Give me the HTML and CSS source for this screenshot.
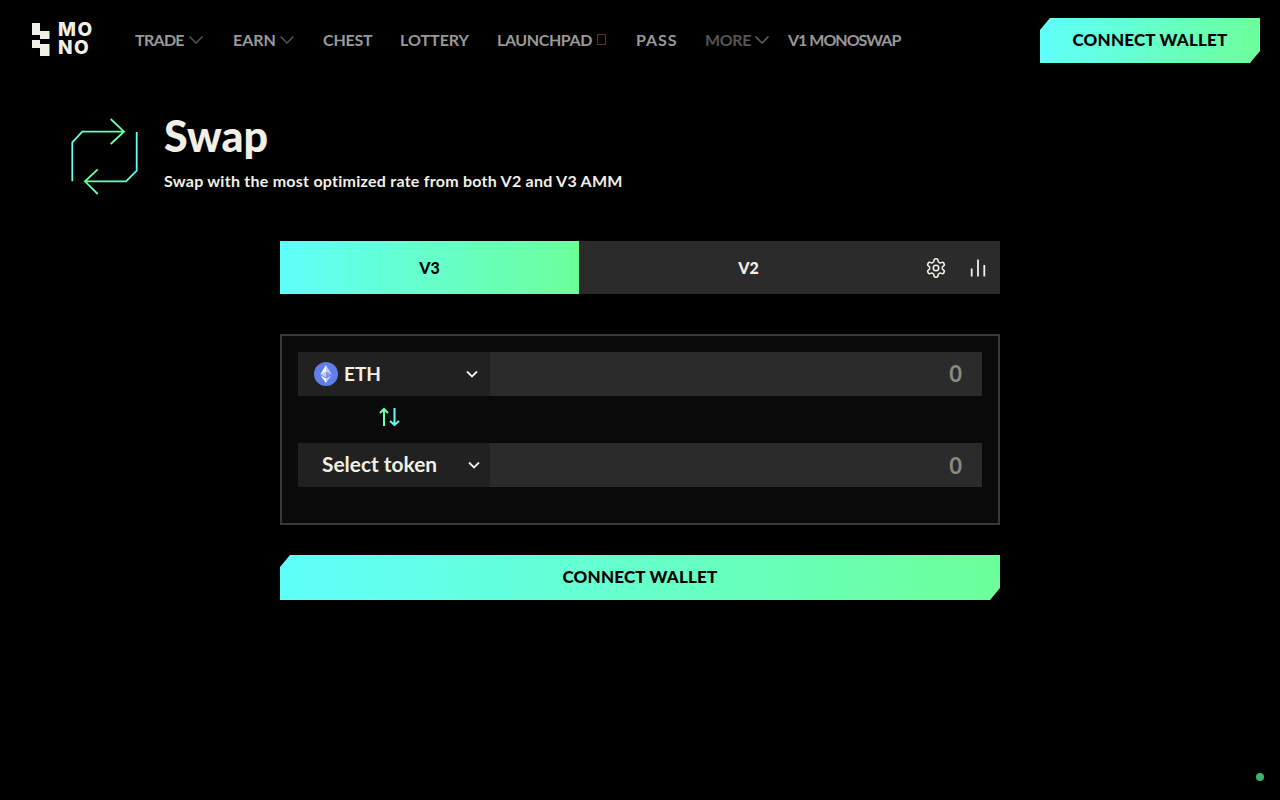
FILE: index.html
```html
<!DOCTYPE html>
<html lang="en">
<head>
<meta charset="utf-8">
<title>Swap</title>
<link rel="stylesheet" href="styles.css">
</head>
<body>
<header class="header">
  <div class="brand">
    <svg class="brand-mark" width="18" height="33" viewBox="0 0 18 33"><path d="M0 0H8V8H17.500V16H8V12H0ZM0 17H8V21H17.500V33H8V25H0Z" fill="#f2f0e6"/></svg>
    <div class="brand-text"><span>MO</span><span>NO</span></div>
  </div>
  <nav class="nav">
    <a class="nav-item w-trade">TRADE <svg class="chev" width="14" height="8" viewBox="0 0 14 8"><path d="M.5.5 7 7 13.500.5" fill="none" stroke="#555" stroke-width="1.500"/></svg></a>
    <a class="nav-item w-earn">EARN <svg class="chev" width="14" height="8" viewBox="0 0 14 8"><path d="M.5.5 7 7 13.500.5" fill="none" stroke="#555" stroke-width="1.500"/></svg></a>
    <a class="nav-item w-chest">CHEST</a>
    <a class="nav-item w-lottery">LOTTERY</a>
    <a class="nav-item w-launch">LAUNCHPAD <i class="tofu"></i></a>
    <a class="nav-item w-pass">PASS</a>
    <a class="nav-item dim w-more">MORE <svg class="chev" width="14" height="8" viewBox="0 0 14 8"><path d="M.5.5 7 7 13.500.5" fill="none" stroke="#666" stroke-width="1.500"/></svg></a>
    <a class="nav-item w-v1">V1 MONOSWAP</a>
  </nav>
  <button class="cta cta-top">CONNECT WALLET</button>
</header>

<section class="hero">
  <svg class="hero-icon" width="68" height="80" viewBox="70 117 68 80" fill="none" stroke-width="1.800">
    <defs>
      <linearGradient id="gt" gradientUnits="userSpaceOnUse" x1="72" y1="0" x2="124" y2="0"><stop offset="0" stop-color="#5ffff5"/><stop offset="1" stop-color="#6cff9a"/></linearGradient>
      <linearGradient id="gb" gradientUnits="userSpaceOnUse" x1="137" y1="0" x2="85" y2="0"><stop offset="0" stop-color="#5ffff5"/><stop offset="1" stop-color="#6cff9a"/></linearGradient>
    </defs>
    <path d="M72.300 181.300V142.300L82.300 131.700H124M110.700 119 124 131.700 110.700 144" stroke="url(#gt)"/>
    <path d="M136.700 132V170.700L126 181.300H85M97.700 169.300 85 181.300 97.700 194" stroke="url(#gb)"/>
  </svg>
  <div class="hero-text">
    <h1 class="title">Swap</h1>
    <p class="subtitle">Swap with the most optimized rate from both V2 and V3 AMM</p>
  </div>
</section>

<main class="panel">
  <div class="tabs">
    <div class="tab tab-active">V3</div>
    <div class="tab tab-idle">V2</div>
    <div class="tab-tools">
      <svg width="22" height="22" viewBox="0 0 24 24" fill="none" stroke="#f2f0e6" stroke-width="1.700" stroke-linecap="round" stroke-linejoin="round"><circle cx="12" cy="12" r="3"/><path d="M12.220 2h-.44a2 2 0 0 0-2 2v.18a2 2 0 0 1-1 1.730l-.43.250a2 2 0 0 1-2 0l-.150-.080a2 2 0 0 0-2.730.730l-.220.380a2 2 0 0 0 .730 2.730l.150.100a2 2 0 0 1 1 1.720v.510a2 2 0 0 1-1 1.740l-.150.090a2 2 0 0 0-.730 2.730l.220.380a2 2 0 0 0 2.730.730l.150-.080a2 2 0 0 1 2 0l.430.250a2 2 0 0 1 1 1.730V20a2 2 0 0 0 2 2h.44a2 2 0 0 0 2-2v-.18a2 2 0 0 1 1-1.730l.430-.250a2 2 0 0 1 2 0l.150.080a2 2 0 0 0 2.730-.730l.220-.390a2 2 0 0 0-.730-2.730l-.150-.080a2 2 0 0 1-1-1.740v-.500a2 2 0 0 1 1-1.740l.150-.090a2 2 0 0 0 .730-2.730l-.220-.380a2 2 0 0 0-2.730-.730l-.150.080a2 2 0 0 1-2 0l-.430-.250a2 2 0 0 1-1-1.730V4a2 2 0 0 0-2-2z"/></svg>
      <svg width="16" height="18" viewBox="0 0 16 18" fill="none" stroke="#f2f0e6" stroke-width="1.800"><path d="M1.700 17.500V9.500M8 17.500V0.500M14.300 17.500V6"/></svg>
    </div>
  </div>

  <div class="card">
    <div class="row">
      <div class="select select-eth">
        <svg class="eth" width="24" height="24" viewBox="0 0 24 24"><circle cx="12" cy="12" r="12" fill="#627eea"/><path d="M12 3v6.700l5.600 2.500z" fill="#fff" fill-opacity=".6"/><path d="M12 3 6.400 12.200 12 9.700z" fill="#fff"/><path d="M12 16.500v4.500l5.600-7.800z" fill="#fff" fill-opacity=".6"/><path d="M12 16.500V21l-5.600-7.800z" fill="#fff"/><path d="m12 15.400 5.600-3.200L12 9.700z" fill="#fff" fill-opacity=".2"/><path d="m6.400 12.200 5.600 3.200V9.700z" fill="#fff" fill-opacity=".6"/></svg>
        <span class="token">ETH</span>
        <svg class="caret" width="12" height="8" viewBox="0 0 12 8"><path d="M1 1.500 6 6.500l5-5" fill="none" stroke="#f2f0e6" stroke-width="1.800"/></svg>
      </div>
      <div class="amount">0</div>
    </div>
    <div class="flip">
      <svg width="22" height="22" viewBox="0 0 22 22" fill="none" stroke-width="2"><path d="M5 20V3M1 7l4-4 4 4" stroke="#6cffb0"/><path d="M15.500 2v17M11 15l4.500 4 4.500-4" stroke="#5ffff0"/></svg>
    </div>
    <div class="row">
      <div class="select select-none">
        <span class="token token-wide">Select token</span>
        <svg class="caret" width="12" height="8" viewBox="0 0 12 8"><path d="M1 1.500 6 6.500l5-5" fill="none" stroke="#f2f0e6" stroke-width="1.800"/></svg>
      </div>
      <div class="amount amount-low">0</div>
    </div>
  </div>

  <button class="cta cta-main">CONNECT WALLET</button>
</main>

<span class="status-dot"></span>
</body>
</html>
```

FILE: styles.css
```css
* { box-sizing: border-box; }
html, body { margin: 0; height: 100%; }
body {
  background: #000;
  color: #f2f0e6;
  font-family: "Lato", "Noto Sans", sans-serif;
  overflow: hidden;
}
.header {
  height: 80px;
  padding: 0 20px 0 32px;
  display: flex;
  align-items: center;
}
.brand { display: flex; align-items: center; gap: 8px; width: 103px; margin-top: -2px; }
.brand-text {
  display: flex;
  flex-direction: column;
  font-family: "Inter", sans-serif;
  font-weight: 800;
  font-size: 19px;
  line-height: 18px;
  letter-spacing: 1.500px;
  color: #f2f0e6;
}
.nav {
  display: flex;
  align-items: center;
  flex: 1;
  font-size: 16px;
  font-weight: 700;
  color: #999;
  padding-bottom: 2px;
}
.nav-item { display: flex; align-items: center; gap: 5px; white-space: nowrap; }
.chev { margin-top: 1px; }
.w-trade { width: 98px; letter-spacing: -.7px; }
.w-earn { width: 90px; gap: 4px; }
.w-chest { width: 77px; letter-spacing: -.2px; }
.w-lottery { width: 97px; }
.w-launch { width: 139px; letter-spacing: -.4px; }
.w-pass { width: 69px; letter-spacing: .9px; }
.w-more { width: 83px; gap: 4px; letter-spacing: -.4px; }
.w-v1 { width: 113px; letter-spacing: -1px; }
.dim { color: #555; }
.tofu {
  display: inline-block;
  width: 9px;
  height: 11px;
  border: 1px solid #6b2a26;
  margin-top: 1px;
}
.cta {
  border: 0;
  padding: 0 0 2px;
  color: #000;
  font: 900 17px "Lato", sans-serif;
  letter-spacing: .2px;
  background: linear-gradient(90deg, #5ffffb, #6cff9a);
  clip-path: polygon(10px 0, 100% 0, 100% calc(100% - 12px), calc(100% - 10px) 100%, 0 100%, 0 12px);
}
.cta-top { width: 220px; height: 45px; margin-top: 1px; }
.hero {
  display: flex;
  align-items: flex-start;
  gap: 26px;
  padding: 32px 0 0 70px;
}
.hero-icon { margin-top: 5px; }
.title { margin: 0; font-size: 43px; line-height: 48px; font-weight: 900; }
.subtitle { margin: 11px 0 0; font-size: 16px; line-height: 20px; font-weight: 700; letter-spacing: .25px; }
.panel { width: 720px; margin: 44px auto 0; }
.tabs { display: flex; height: 53px; background: #2b2b2b; align-items: center; }
.tab { display: flex; align-items: center; justify-content: center; height: 100%; font-size: 16px; font-weight: 900; padding-bottom: 1px; }
.tab-active { width: 299px; color: #000; background: linear-gradient(90deg, #5ffffb, #6cff9a); }
.tab-idle { width: 339px; }
.tab-tools { display: flex; align-items: center; gap: 23px; padding-left: 7px; }
.card {
  margin-top: 40px;
  height: 191px;
  padding: 16px;
  border: 2px solid #383838;
  background: #0a0a0a;
}
.row { display: flex; height: 44px; }
.select {
  width: 192px;
  background: #212121;
  display: flex;
  align-items: center;
  position: relative;
}
.select-eth { padding-left: 16px; gap: 6px; }
.select-none { padding-left: 24px; }
.token { font-size: 19px; font-weight: 700; padding-bottom: 1px; }
.token-wide { font-size: 20.900px; padding-bottom: 3px; }
.select-eth .caret { position: absolute; left: 168px; top: 18px; }
.select-none .caret { position: absolute; left: 170px; top: 18px; }
.amount {
  flex: 1;
  background: #2b2b2b;
  color: #8a8a80;
  font-size: 22px;
  font-weight: 700;
  line-height: 43px;
  text-align: right;
  padding-right: 20px;
}
.amount-low { line-height: 45px; }
.flip { height: 47px; padding: 10px 0 0 81px; display: flex; align-items: flex-start; }
.cta-main { display: block; width: 720px; height: 45px; margin-top: 30px; }
.status-dot {
  position: fixed;
  left: 1256px;
  top: 773px;
  width: 8px;
  height: 8px;
  border-radius: 50%;
  background: #3cb46e;
}
```
